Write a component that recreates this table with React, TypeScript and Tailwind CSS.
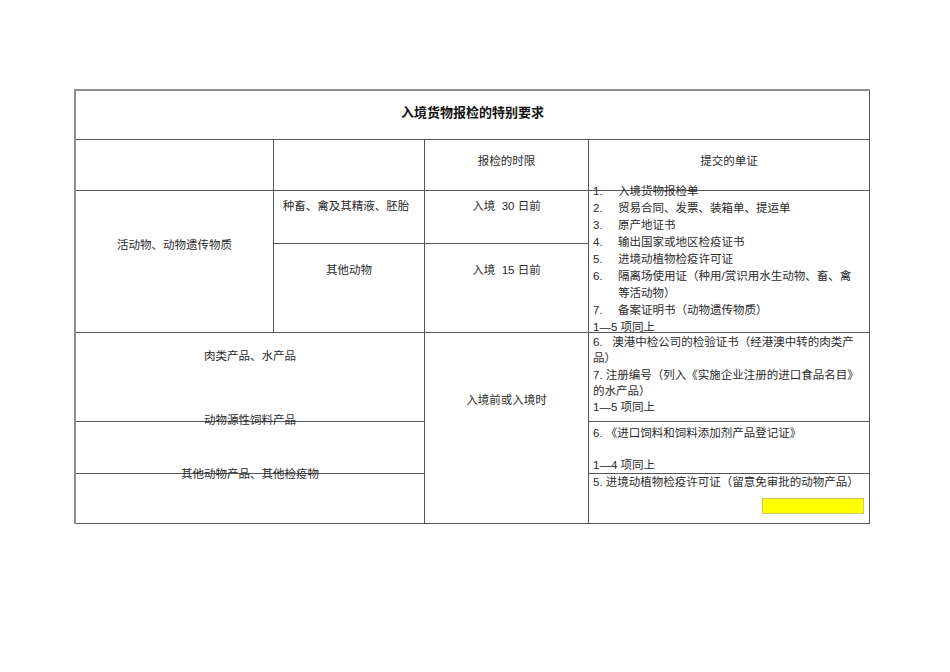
import React from "react";

const cell = "border-r border-b border-[#555] text-center";

export default function App() {
  return (
    <div className="min-h-[672px] w-[950px] bg-white pt-[89px] pl-[74px] text-[11.5px] text-[#2a2a2a] [font-family:'Liberation_Sans','Noto_Sans_CJK_SC',sans-serif]">
      <div className="grid w-[794px] grid-cols-[198px_151px_164px_281px] grid-rows-[49px_51px_53px_89px_89px_52px_50px] border-t-2 border-l-2 border-[#8f8f8f] box-content">
        {/* 标题 */}
        <div className={`${cell} col-span-4 pt-[13px]`}>
          <p className="text-[13px] font-bold leading-[17px] text-[#111]">入境货物报检的特别要求</p>
        </div>

        {/* 表头 */}
        <div className={cell}></div>
        <div className={cell}></div>
        <div className={`${cell} pt-[13px]`}>
          <p className="leading-[17px]">报检的时限</p>
        </div>
        <div className={`${cell} pt-[13px]`}>
          <p className="leading-[17px]">提交的单证</p>
        </div>

        {/* 活动物 */}
        <div className={`${cell} row-span-2 pt-[46px]`}>
          <p className="leading-[17px]">活动物、动物遗传物质</p>
        </div>
        <div className={`${cell} pt-[7px]`}>
          <p className="leading-[17px] pr-[6px]">种畜、禽及其精液、胚胎</p>
        </div>
        <div className={`${cell} pt-[7px]`}>
          <p className="leading-[17px] whitespace-pre">入境  30 日前</p>
        </div>
        <div className={`${cell} row-span-2 text-left pl-[4px]`}>
          <div className="-mt-[8px] leading-[17px] whitespace-nowrap">
            {[
              ["1.", "入境货物报检单"],
              ["2.", "贸易合同、发票、装箱单、提运单"],
              ["3.", "原产地证书"],
              ["4.", "输出国家或地区检疫证书"],
              ["5.", "进境动植物检疫许可证"],
              ["6.", "隔离场使用证（种用/赏识用水生动物、畜、禽"],
              ["", "等活动物）"],
              ["7.", "备案证明书（动物遗传物质）"],
            ].map(([n, t], i) => (
              <div key={i} className="flex">
                <span className="w-[25px] shrink-0">{n}</span>
                <span>{t}</span>
              </div>
            ))}
            <div>1—5 项同上</div>
          </div>
        </div>
        <div className={`${cell} pt-[18px]`}>
          <p className="leading-[17px]">其他动物</p>
        </div>
        <div className={`${cell} pt-[18px]`}>
          <p className="leading-[17px] whitespace-pre">入境  15 日前</p>
        </div>

        {/* 动物产品 */}
        <div className={`${cell} col-span-2 pt-[15px]`}>
          <p className="leading-[17px]">肉类产品、水产品</p>
        </div>
        <div className={`${cell} row-span-3 pt-[59px]`}>
          <p className="leading-[17px]">入境前或入境时</p>
        </div>
        <div className={`${cell} text-left pl-[4px] pt-[1px]`}>
          <div className="leading-[16.3px] whitespace-nowrap">
            <div>6.&nbsp;&nbsp; 澳港中检公司的检验证书（经港澳中转的肉类产</div>
            <div>品）</div>
            <div>7. 注册编号（列入《实施企业注册的进口食品名目》</div>
            <div>的水产品）</div>
            <div>1—5 项同上</div>
          </div>
        </div>

        <div className={`${cell} col-span-2`}>
          <p className="-mt-[10px] leading-[17px]">动物源性饲料产品</p>
        </div>
        <div className={`${cell} text-left pl-[4px] pt-[3px]`}>
          <div className="leading-[16px] whitespace-nowrap">
            <div>6. 《进口饲料和饲料添加剂产品登记证》</div>
            <div>&nbsp;</div>
            <div>1—4 项同上</div>
          </div>
        </div>

        <div className={`${cell} col-span-2`}>
          <p className="-mt-[8px] leading-[17px]">其他动物产品、其他检疫物</p>
        </div>
        <div className={`${cell} text-left pl-[4px]`}>
          <div className="leading-[16px] whitespace-nowrap">5. 进境动植物检疫许可证（留意免审批的动物产品）</div>
          <div className="mt-[8px] flex justify-end pr-[5px]">
            <div className="h-[16px] w-[102px] border border-[#c9c96a] bg-[#ffff00]"></div>
          </div>
        </div>
      </div>
    </div>
  );
}
